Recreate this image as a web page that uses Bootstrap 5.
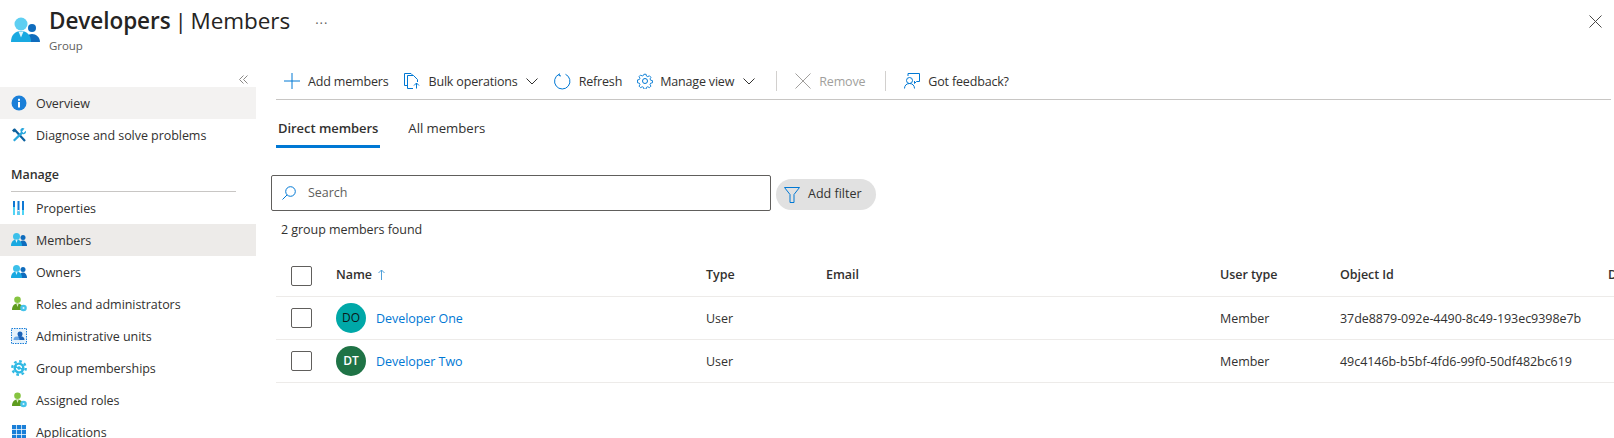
<!DOCTYPE html>
<html lang="en">
<head>
    <meta charset="UTF-8">
    <meta name="viewport" content="width=device-width, initial-scale=1.0">
    <title>Developers | Members</title>
    <link href="https://cdn.jsdelivr.net/npm/bootstrap@5.3.0/dist/css/bootstrap.min.css" rel="stylesheet">
    <style>
        html, body { height: 100%; }
        body {
            font-family: "Open Sans", "Noto Sans", sans-serif;
            font-size: 12.5px;
            letter-spacing: -0.05px;
            color: #323130;
            background: #fff;
            overflow: hidden;
        }
        a { text-decoration: none; }

        /* header */
        .blade-head { height: 72px; padding: 6px 12px 0 11px; }
        .blade-icon { margin-top: 11px; margin-right: 9px; flex: none; }
        .blade-title { font-size: 22.5px; line-height: 30px; margin: 0; font-weight: 400; color: #252423; word-spacing: -2px; }
        .blade-title b { font-weight: 600; }
        .blade-sub { font-size: 11.5px; color: #605e5c; line-height: 16px; margin-top: 2px; }
        .blade-more { margin-left: 25px; margin-top: 10px; color: #605e5c; font-size: 13px; line-height: 14px; letter-spacing: 1px; }
        .blade-close { margin-top: 6px; }

        /* side menu */
        .side-menu { width: 256px; flex: none; }
        .side-collapse { height: 15px; padding-right: 8px; }
        .side-item { height: 32px; padding: 0 0 0 11px; color: #323130; font-size: 12.5px; gap: 9px; }
        .side-item:hover { color: #323130; }
        .side-txt { padding-top: 2px; }
        .side-icon { width: 16px; height: 16px; flex: none; }
        .side-overview { background: #f3f2f1; }
        .side-current { background: #edebe9; }
        .side-label { font-weight: 600; margin: 9px 20px 0 11px; height: 32px; line-height: 29px; border-bottom: 1px solid #c8c6c4; color: #323130; }

        /* toolbar */
        .main-pane { min-width: 0; }
        .cmd-bar { margin-left: 20px; margin-right: 3px; height: 37px; border-bottom: 1px solid #c8c6c4; margin-top: -9px; padding-left: 8px; }
        .cmd-btn { border: 0; padding: 0; margin-right: 16px; font-size: 12.5px; letter-spacing: -0.17px; color: #323130; gap: 8px; border-radius: 0; }
        .cmd-tight { margin-right: 15px; }
        .cmd-view { gap: 7px; margin-right: 18px; }
        .cmd-view .cmd-txt { margin-right: 2px; }
        .cmd-txt { padding-top: 2px; }
        .cmd-off, .cmd-off:disabled { color: #a19f9d; opacity: 1; margin-right: 17px; }
        .cmd-sep { width: 1px; height: 20px; background: #d2d0ce; margin-right: 18px; margin-left: 3px; }

        /* tabs */
        .tab-row { margin-left: 20px; height: 48px; gap: 26px; }
        .tab-item { color: #323130; padding: 0 2px; height: 48px; line-height: 56px; font-size: 13.2px; display: block; }
        .tab-active { font-weight: 600; font-size: 13px; line-height: 57px; border-bottom: 3px solid #0078d4; }
        .tab-row .tab-item:hover { color: #323130; }

        /* search */
        .search-row { margin: 27px 0 0 15px; }
        .search-box { width: 500px; height: 36px; border: 1px solid #605e5c; border-radius: 2px; padding-left: 10px; gap: 12px; color: #605e5c; }
        .filter-pill { margin-left: 5px; margin-top: 4px; height: 31px; width: 100px; background: #e1e1e1; border: 0; border-radius: 16px; padding: 0 0 0 8px; gap: 8px; font-size: 12.5px; color: #323130; }
        .found-text { margin: 10px 0 0 25px; line-height: 17px; }

        /* grid */
        .member-wrap { margin: 16px 0 0 20px; overflow: hidden; }
        .member-grid { table-layout: fixed; width: 1440px; margin: 0; font-size: 12.5px; color: #323130; }
        .member-grid th { font-weight: 600; height: 42px; padding: 2px 0 0 0; }
        .member-grid td { height: 43px; padding: 4px 0 0 0; }
        .member-grid th, .member-grid td { vertical-align: middle; border-color: #edebe9; color: #323130; white-space: nowrap; }
        .member-grid thead th { border-bottom: 1px solid #edebe9; }
        .col-check { width: 60px; padding-left: 15px !important; }
        .col-name { width: 370px; }
        .col-type { width: 120px; }
        .col-mail { width: 394px; }
        .col-utype { width: 120px; }
        .col-oid { width: 268px; }
        .tick-box { display: block; width: 21px; height: 20px; border: 1px solid #605e5c; border-radius: 2px; background: #fff; }
        .member-grid td .tick-box { margin-top: -3px; }
        .sort-arrow { margin-left: 3px; vertical-align: -1px; }
        .face { width: 30px; height: 30px; border-radius: 50%; font-size: 12px; font-weight: 600; margin: -3px 10px 0 0; flex: none; }
        .face-one { background: #00a8a8; color: #0b1a1a; font-weight: 500; }
        .face-two { background: #1f7346; color: #fff; }
        .member-link { color: #0078d4; }
    </style>
</head>
<body>
    <!-- header -->
    <div class="blade-head d-flex">
        <svg class="blade-icon" width="29" height="26" viewBox="0 0 29 26">
            <circle cx="21" cy="11" r="4" fill="#0f6cbd"/>
            <path d="M14 25c0-5 3-8 7-8s8 3 8 8z" fill="#0f6cbd"/>
            <circle cx="10" cy="7" r="6.500" fill="#5ecff2"/>
            <path d="M0 25c0-7 4-11 10-11s10 4 10 11z" fill="#19a9e1"/>
            <path d="M7.500 14.500h5l-2.500 6z" fill="#dff6fd"/>
        </svg>
        <div>
            <h1 class="blade-title"><b>Developers</b> | Members</h1>
            <div class="blade-sub">Group</div>
        </div>
        <div class="blade-more">···</div>
        <div class="blade-close ms-auto">
            <svg width="13" height="13" viewBox="0 0 13 13"><path d="M.5.5l12 12M12.500.5l-12 12" stroke="#494847" fill="none"/></svg>
        </div>
    </div>

    <div class="d-flex">
        <!-- side menu -->
        <nav class="side-menu">
            <div class="side-collapse d-flex justify-content-end align-items-center">
                <svg width="9" height="9" viewBox="0 0 9 9"><path d="M4.500.5l-4 4 4 4M8.500.5l-4 4 4 4" stroke="#8a8886" fill="none"/></svg>
            </div>
            <div class="nav flex-column">
                <a class="nav-link side-item side-overview d-flex align-items-center" href="#">
                    <svg class="side-icon" viewBox="0 0 16 16"><circle cx="8" cy="8" r="7.500" fill="#1a7fd8"/><rect x="7" y="7" width="2" height="5.500" fill="#fff"/><rect x="7" y="3.800" width="2" height="2" fill="#fff"/></svg>
                    <span class="side-txt">Overview</span>
                </a>
                <a class="nav-link side-item d-flex align-items-center" href="#">
                    <svg class="side-icon" viewBox="0 0 16 16"><path d="M3 2l11 12" stroke="#0a5f9e" stroke-width="2.200"/><path d="M13.500 1.500c-1.500-1-3.500-.5-4 1-.3 1 0 2 .5 2.500L2 13l1.500 1.500 8-7.500c1 .5 2 .3 2.800-.5.700-.8.900-1.800.5-2.800L12.500 6 11 4.500z" fill="#2aa7dc"/><path d="M1 3.500l2-2 2 2-2 2z" fill="#0f5f99"/></svg>
                    <span class="side-txt">Diagnose and solve problems</span>
                </a>
            </div>
            <div class="side-label">Manage</div>
            <div class="nav flex-column">
                <a class="nav-link side-item d-flex align-items-center" href="#">
                    <svg class="side-icon" viewBox="0 0 16 16"><rect x="2" y="1" width="2" height="14" fill="#50d4f5"/><rect x="6.500" y="1" width="2" height="14" fill="#0f78d4"/><rect x="11" y="1" width="2" height="14" fill="#50d4f5"/><rect x="2" y="1" width="2" height="6" fill="#0f78d4"/><rect x="11" y="1" width="2" height="9" fill="#0f78d4"/><rect x="6.500" y="10" width="2" height="1.500" fill="#fff"/><rect x="6.500" y="11.500" width="2" height="3.500" fill="#50d4f5"/></svg>
                    <span class="side-txt">Properties</span>
                </a>
                <a class="nav-link side-item side-current d-flex align-items-center" href="#">
                    <svg class="side-icon" viewBox="0 0 16 16"><circle cx="12" cy="5.500" r="2.500" fill="#0f6cbd"/><path d="M8 14c0-3.500 2-5.500 4-5.500s4 2 4 5.500z" fill="#0f6cbd"/><circle cx="5.500" cy="4.500" r="3.500" fill="#3cc0ea"/><path d="M0 14c0-4 2-6.500 5.500-6.500S11 10 11 14z" fill="#19a9e1"/><path d="M4.300 7.600h2.400L5.500 11z" fill="#dff6fd"/></svg>
                    <span class="side-txt">Members</span>
                </a>
                <a class="nav-link side-item d-flex align-items-center" href="#">
                    <svg class="side-icon" viewBox="0 0 16 16"><circle cx="12" cy="5.500" r="2.500" fill="#0f6cbd"/><path d="M8 14c0-3.500 2-5.500 4-5.500s4 2 4 5.500z" fill="#0f6cbd"/><circle cx="5.500" cy="4.500" r="3.500" fill="#3cc0ea"/><path d="M0 14c0-4 2-6.500 5.500-6.500S11 10 11 14z" fill="#19a9e1"/><path d="M4.300 7.600h2.400L5.500 11z" fill="#dff6fd"/></svg>
                    <span class="side-txt">Owners</span>
                </a>
                <a class="nav-link side-item d-flex align-items-center" href="#">
                    <svg class="side-icon" viewBox="0 0 16 16"><circle cx="6.500" cy="3.800" r="3.300" fill="#86c440"/><path d="M1 14c0-4 2-6.500 5.500-6.500S12 10 12 14z" fill="#5e9c1f"/><path d="M5.300 7.600h2.400L6.500 11z" fill="#d9efbf"/><circle cx="12.500" cy="12" r="3.300" fill="#45c3ea"/><circle cx="12.500" cy="12" r="1" fill="#dff6fd"/></svg>
                    <span class="side-txt">Roles and administrators</span>
                </a>
                <a class="nav-link side-item d-flex align-items-center" href="#">
                    <svg class="side-icon" viewBox="0 0 16 16"><rect x=".5" y=".5" width="15" height="15" fill="#e7f2fb" stroke="#1a7fd8" stroke-dasharray="1.500 1"/><circle cx="9" cy="6" r="2.500" fill="#1b62b8"/><path d="M5 12c0-3 2-4 4-4s4.500 1 4.500 4z" fill="#1b62b8"/><path d="M2.500 12c0-2 1-3.500 3-3.500s3 1.500 3 3.500z" fill="#6aa7e6"/></svg>
                    <span class="side-txt">Administrative units</span>
                </a>
                <a class="nav-link side-item d-flex align-items-center" href="#">
                    <svg class="side-icon" viewBox="0 0 16 16"><circle cx="8" cy="8" r="5.500" fill="#2fb9e4"/><circle cx="8" cy="8" r="6.700" fill="none" stroke="#2fb9e4" stroke-width="2.400" stroke-dasharray="2.600 2.660"/><path d="M5.500 8a2.500 2.500 0 0 0 4.500 1.500M10.500 8A2.500 2.500 0 0 0 6 6.500" fill="none" stroke="#fff" stroke-width="1.300"/></svg>
                    <span class="side-txt">Group memberships</span>
                </a>
                <a class="nav-link side-item d-flex align-items-center" href="#">
                    <svg class="side-icon" viewBox="0 0 16 16"><circle cx="6.500" cy="3.800" r="3.300" fill="#86c440"/><path d="M1 14c0-4 2-6.500 5.500-6.500S12 10 12 14z" fill="#5e9c1f"/><path d="M5.300 7.600h2.400L6.500 11z" fill="#d9efbf"/><circle cx="12.500" cy="12" r="3.300" fill="#45c3ea"/><circle cx="12.500" cy="12" r="1" fill="#dff6fd"/></svg>
                    <span class="side-txt">Assigned roles</span>
                </a>
                <a class="nav-link side-item d-flex align-items-center" href="#">
                    <svg class="side-icon" viewBox="0 0 16 16"><path d="M1 1h4.200v4.200H1zM5.900 1h4.200v4.200H5.900zM10.800 1H15v4.200h-4.200zM1 5.900h4.200v4.200H1zM5.900 5.900h4.200v4.200H5.900zM10.800 5.900H15v4.200h-4.200zM1 10.800h4.200V15H1zM5.900 10.800h4.200V15H5.900zM10.800 10.800H15V15h-4.200z" fill="#1a7fd8"/></svg>
                    <span class="side-txt">Applications</span>
                </a>
            </div>
        </nav>

        <!-- main -->
        <main class="main-pane flex-grow-1">
            <div class="cmd-bar d-flex align-items-center">
                <button class="btn cmd-btn d-flex align-items-center">
                    <svg width="16" height="16" viewBox="0 0 16 16"><path d="M8 0v16M0 8h16" stroke="#0078d4" fill="none"/></svg>
                    <span class="cmd-txt">Add members</span>
                </button>
                <button class="btn cmd-btn d-flex align-items-center">
                    <svg width="16" height="16" viewBox="0 0 16 16"><path d="M3.500 12.500H.5V.5h6.500l2 2" stroke="#0078d4" fill="none"/><path d="M9 15.500H3.500v-13h6l4 4v2.500" stroke="#0078d4" fill="none"/><path d="M12.500 15.500V10M10 12.500l2.500-2.500 2.500 2.500" stroke="#0078d4" fill="none"/></svg>
                    <span class="cmd-txt">Bulk operations</span>
                    <svg width="12" height="7" viewBox="0 0 12 7"><path d="M.5.5l5.500 5.500 5.500-5.500" stroke="#323130" fill="none"/></svg>
                </button>
                <button class="btn cmd-btn cmd-tight d-flex align-items-center">
                    <svg width="17" height="17" viewBox="0 0 17 17"><path d="M5 1.300A7.700 7.700 0 1 0 11.500 1.300" stroke="#0078d4" fill="none"/><path d="M5.500.5L5 2.500l2 .5" stroke="#0078d4" fill="none"/></svg>
                    <span class="cmd-txt">Refresh</span>
                </button>
                <button class="btn cmd-btn cmd-view d-flex align-items-center">
                    <svg width="16" height="16" viewBox="0 0 16 16"><circle cx="8" cy="8" r="2.500" stroke="#0078d4" fill="none"/><path d="M6.800.5h2.400l.4 2 1.500.7 1.800-1 1.700 1.700-1 1.800.7 1.500 2 .4v2.400l-2 .4-.7 1.500 1 1.800-1.700 1.700-1.800-1-1.500.7-.4 2H6.800l-.4-2-1.500-.7-1.800 1-1.700-1.700 1-1.800-.7-1.500-2-.4V6.800l2-.4.700-1.500-1-1.800 1.700-1.700 1.800 1 1.500-.7z" transform="translate(.8 .8) scale(.9)" stroke="#0078d4" fill="none"/></svg>
                    <span class="cmd-txt">Manage view</span>
                    <svg width="12" height="7" viewBox="0 0 12 7"><path d="M.5.5l5.500 5.500 5.500-5.500" stroke="#323130" fill="none"/></svg>
                </button>
                <span class="cmd-sep"></span>
                <button class="btn cmd-btn cmd-off d-flex align-items-center" disabled>
                    <svg width="16" height="16" viewBox="0 0 16 16"><path d="M.5.5l15 15M15.500.5l-15 15" stroke="#a19f9d" fill="none"/></svg>
                    <span class="cmd-txt">Remove</span>
                </button>
                <span class="cmd-sep"></span>
                <button class="btn cmd-btn d-flex align-items-center">
                    <svg width="16" height="16" viewBox="0 0 16 16"><path d="M4 3V.5h11.500v8h-3l-2 2V8" stroke="#0078d4" fill="none"/><circle cx="5.500" cy="7.500" r="3" stroke="#0078d4" fill="none"/><path d="M.5 15.500c0-3 2-5 5-5s5 2 5 5" stroke="#0078d4" fill="none"/></svg>
                    <span class="cmd-txt">Got feedback?</span>
                </button>
            </div>

            <div class="tab-row d-flex">
                <a class="tab-item tab-active" href="#">Direct members</a>
                <a class="tab-item" href="#">All members</a>
            </div>

            <div class="search-row d-flex align-items-start">
                <div class="search-box d-flex align-items-center">
                    <svg width="14" height="14" viewBox="0 0 14 14"><circle cx="8.500" cy="5.500" r="4.800" stroke="#0078d4" fill="none"/><path d="M5 9L.5 13.500" stroke="#0078d4" fill="none"/></svg>
                    <span>Search</span>
                </div>
                <button class="btn filter-pill d-flex align-items-center">
                    <svg width="16" height="16" viewBox="0 0 16 16"><path d="M.5.5h15L10 7.500v8H6v-8z" stroke="#0078d4" fill="none"/></svg>
                    Add filter
                </button>
            </div>
            <div class="found-text">2 group members found</div>

            <div class="member-wrap">
                <table class="table member-grid">
                    <thead>
                        <tr>
                            <th class="col-check"><span class="tick-box"></span></th>
                            <th class="col-name">Name <svg class="sort-arrow" width="7" height="11" viewBox="0 0 7 11"><path d="M3.500 11V1M.5 4l3-3 3 3" stroke="#4f9fd8" fill="none"/></svg></th>
                            <th class="col-type">Type</th>
                            <th class="col-mail">Email</th>
                            <th class="col-utype">User type</th>
                            <th class="col-oid">Object Id</th>
                            <th>Date</th>
                        </tr>
                    </thead>
                    <tbody>
                        <tr>
                            <td class="col-check"><span class="tick-box"></span></td>
                            <td><div class="d-flex align-items-center"><span class="face face-one d-flex align-items-center justify-content-center">DO</span><a class="member-link" href="#">Developer One</a></div></td>
                            <td>User</td>
                            <td></td>
                            <td>Member</td>
                            <td>37de8879-092e-4490-8c49-193ec9398e7b</td>
                            <td></td>
                        </tr>
                        <tr>
                            <td class="col-check"><span class="tick-box"></span></td>
                            <td><div class="d-flex align-items-center"><span class="face face-two d-flex align-items-center justify-content-center">DT</span><a class="member-link" href="#">Developer Two</a></div></td>
                            <td>User</td>
                            <td></td>
                            <td>Member</td>
                            <td>49c4146b-b5bf-4fd6-99f0-50df482bc619</td>
                            <td></td>
                        </tr>
                    </tbody>
                </table>
            </div>
        </main>
    </div>
</body>
</html>
